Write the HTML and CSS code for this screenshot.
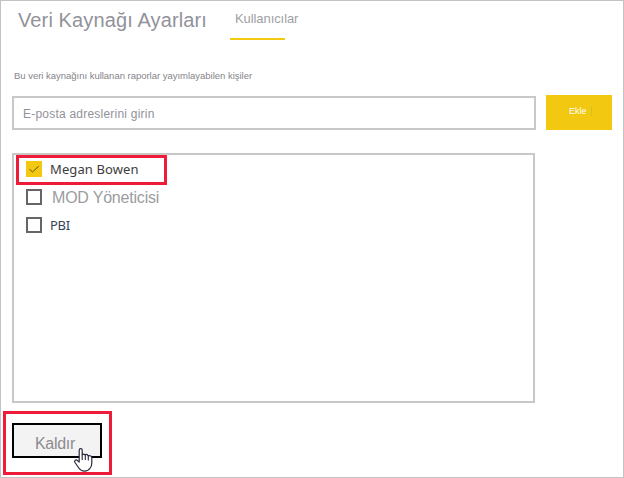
FILE: index.html
```html
<!DOCTYPE html>
<html lang="tr">
<head>
<meta charset="utf-8">
<title>Veri Kaynağı Ayarları</title>
<link rel="stylesheet" href="styles.css">
</head>
<body>
<main class="panel">
  <header class="header">
    <h1 class="title"><span>Veri Kaynağı Ayarları</span></h1>
    <div class="tab"><span>Kullanıcılar</span></div>
  </header>
  <p class="hint"><span>Bu veri kaynağını kullanan raporlar yayımlayabilen kişiler</span></p>
  <div class="entry">
    <div class="field"><span>E-posta adreslerini girin</span></div>
    <div class="add"><span>Ekle</span></div>
  </div>
  <div class="list">
    <div class="row selected">
      <svg class="box" viewBox="0 0 16 16"><rect width="16" height="16" fill="#f2c811"/><path d="M3.5 8.2 6.5 11 12.7 5.2" fill="none" stroke="#5c5010" stroke-width="1"/></svg>
      <span class="name">Megan Bowen</span>
    </div>
    <div class="row">
      <span class="box empty"></span>
      <span class="name light">MOD Yöneticisi</span>
    </div>
    <div class="row">
      <span class="box empty"></span>
      <span class="name pbi">PBI</span>
    </div>
  </div>
  <div class="callout">
    <div class="remove"><span>Kaldır</span></div>
    <svg class="cursor" viewBox="0 0 19 24"><path d="M5.2 14V2.2Q5.2.7 6.7.7 8.2.7 8.2 2.2V6.6Q9.4 5.4 11.2 6.8 12.8 5.9 14 7.6 17.8 7.2 17.8 10V15Q17.8 18 16.2 20 14.2 23.2 10.5 23.2 7 23.2 4.8 20L1 14.5Q.2 13 1.3 12.2 2.4 11.4 3.7 12.7Z" fill="#fff" stroke="#29293c" stroke-width="1.2" stroke-linejoin="round"/><path d="M8.2 6.5V12M11.3 7V12M14.3 8V12.5" fill="none" stroke="#29293c" stroke-width="1.1"/></svg>
  </div>
</main>
</body>
</html>
```
FILE: styles.css
```css
* { box-sizing: border-box; }
body { margin: 0; background: #fff; font-family: "Liberation Sans", Arial, sans-serif; color: #92929a; }
.panel { width: 624px; height: 478px; border: 1px solid #c3c3c3; overflow: hidden; }
.header { display: flex; height: 39px; }
.title { margin: 0; padding: 7px 0 0 17px; width: 229px; font-size: 20px; line-height: 24px; font-weight: 400; letter-spacing: 0.12px; white-space: nowrap; }
.tab { width: 55px; border-bottom: 2px solid #f2c811; padding: 10px 0 0 5px; font-size: 13px; line-height: 16px; letter-spacing: -0.08px; white-space: nowrap; color: #a0a0a4; }
.hint { margin: 28px 0 0 13px; height: 16px; font-size: 9.5px; line-height: 16px; letter-spacing: -0.02px; white-space: nowrap; color: #85858b; }
.entry { display: flex; align-items: flex-end; margin: 11px 0 0 11px; height: 35px; gap: 10px; }
.field { width: 524px; height: 34px; border: 2px solid #c8c8c8; padding: 8px 0 0 9px; font-size: 12px; line-height: 16px; letter-spacing: 0.22px; white-space: nowrap; }
.add { width: 66px; height: 35px; background: #f2c811; color: #fff; font-size: 9px; line-height: 32px; padding-left: 23px; }
.add span { display: inline-block; width: 23px; height: 10px; line-height: 10px; border-right: 1px solid #c9c81a; }
.list { width: 523px; height: 250px; margin: 23px 0 0 11px; border: 2px solid #c8c8c8; }
.row { display: flex; align-items: center; height: 28px; padding-left: 12px; gap: 8px; }
.selected { width: 151px; height: 30px; border: 3px solid #ee1c38; margin: 0 0 -2px 2px; padding: 0 0 2px 7px; }
.box { width: 16px; height: 16px; flex: none; }
.empty { border: 2px solid #666; }
.name { font-family: "Noto Sans", sans-serif; font-size: 13px; line-height: 20px; letter-spacing: 0.1px; color: #3c3c40; white-space: nowrap; }
.pbi { letter-spacing: -0.3px; color: #354458; }
.light { font-family: "Liberation Sans", sans-serif; font-size: 16px; letter-spacing: -0.2px; padding: 2px 0 0 2px; color: #9c9c9e; }
.callout { position: relative; width: 109px; height: 64px; margin: 8px 0 0 2px; border: 3px solid #ee1c38; padding: 9px 0 0 6px; }
.remove { width: 90px; height: 35px; background: #f3f3f3; border: 2px solid #000; padding: 10px 0 0 21px; font-size: 16px; line-height: 18px; letter-spacing: -0.3px; color: #8c8c8e; }
.cursor { position: absolute; left: 68px; top: 34px; width: 19px; height: 24px; }
```
